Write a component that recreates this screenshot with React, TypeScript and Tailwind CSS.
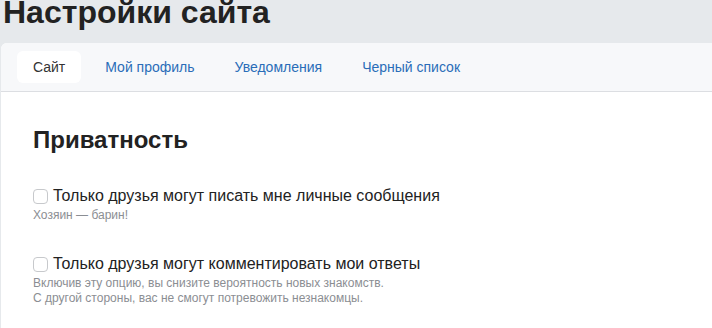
import React from "react";

const tabs = ["Сайт", "Мой профиль", "Уведомления", "Черный список"];

const Option = ({ label, hints }: { label: string; hints: string[] }) => {
  return (
    <div className="flex flex-col">
      <label className="flex items-center gap-[5px] text-[16px] leading-5 text-[#222]">
        <span className="w-[15px] h-[15px] rounded-[4px] border border-[#c7c9cc] bg-white"></span>
        {label}
      </label>
      <div className="mt-[2px] text-[12px] leading-[15px] text-[#8b8e93]">
        {hints.map((h) => (
          <p key={h}>{h}</p>
        ))}
      </div>
    </div>
  );
};

export default function App() {
  return (
    <div className="w-[712px] h-[328px] overflow-hidden bg-[#e6e9ec] pl-px font-['Liberation_Sans',Arial,sans-serif]">
      <h1 className="h-[42px] pl-[2px] text-[32px] font-bold leading-none text-[#222] -mt-[4px]">
        Настройки сайта
      </h1>
      <div className="rounded-tl-[6px] bg-white mt-[5px] overflow-hidden h-full">
        <nav className="flex items-center gap-2 h-[49px] bg-[#f7f8fa] border-b border-[#dcdee2] px-4">
          {tabs.map((t, i) => (
            <div
              key={t}
              className={
                i === 0
                  ? "h-8 px-4 flex items-center rounded-[6px] bg-white text-[14px] text-[#333]"
                  : "h-8 px-4 flex items-center text-[14px] text-[#2a6db8]"
              }
            >
              {t}
            </div>
          ))}
        </nav>
        <section className="px-8 pt-[34px]">
          <h2 className="text-[24px] font-bold leading-7 text-[#222]">Приватность</h2>
          <div className="mt-[32px] flex flex-col gap-[31px]">
            <Option label="Только друзья могут писать мне личные сообщения" hints={["Хозяин — барин!"]} />
            <Option
              label="Только друзья могут комментировать мои ответы"
              hints={[
                "Включив эту опцию, вы снизите вероятность новых знакомств.",
                "С другой стороны, вас не смогут потревожить незнакомцы.",
              ]}
            />
          </div>
        </section>
      </div>
    </div>
  );
}
